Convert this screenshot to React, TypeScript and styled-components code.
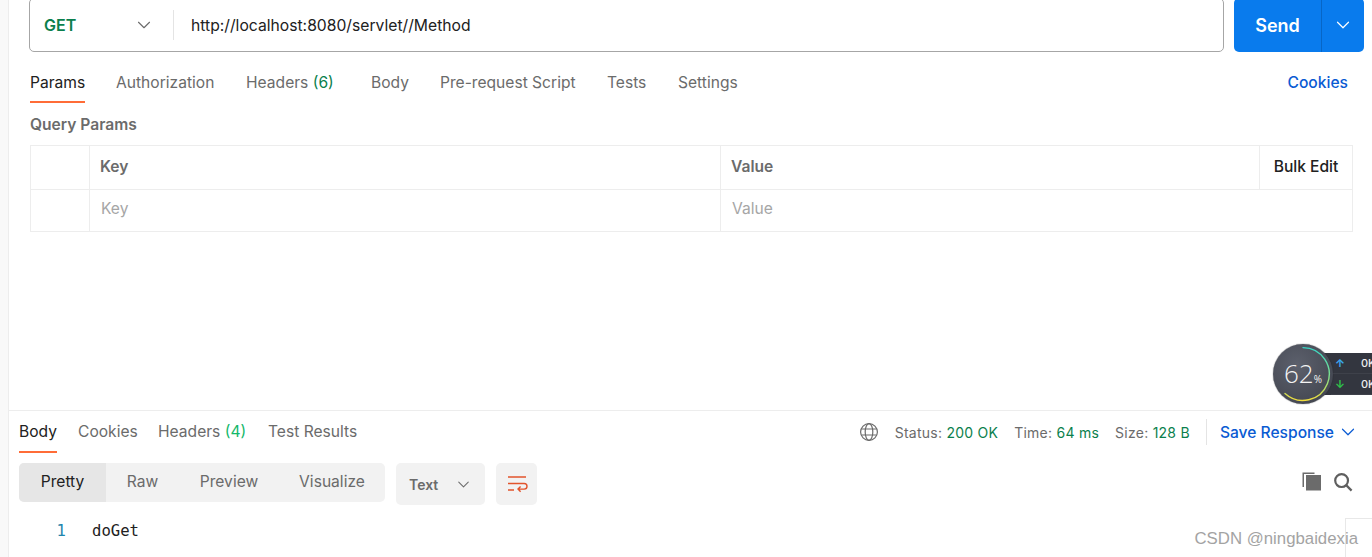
import React from "react";
import styled, { createGlobalStyle } from "styled-components";
import { ChevronDown } from "lucide-react";

const GlobalStyle = createGlobalStyle`
  html, body {
    margin: 0;
    padding: 0;
    background: #fff;
  }
  body {
    font-family: Inter, "Liberation Sans", sans-serif;
    font-size: 15.6px;
    color: #212121;
  }
  * {
    box-sizing: border-box;
  }
`;

const requestTabs = [
  { label: "Params", active: true, width: 55, gap: 31 },
  { label: "Authorization", width: 99, gap: 31 },
  { label: "Headers", count: "(6)", width: 88, gap: 37 },
  { label: "Body", width: 38, gap: 31 },
  { label: "Pre-request Script", width: 136, gap: 31 },
  { label: "Tests", width: 40, gap: 31 },
  { label: "Settings", width: 61, gap: 0 },
];

const responseTabs = [
  { label: "Body", active: true, width: 38, gap: 21 },
  { label: "Cookies", width: 59, gap: 21 },
  { label: "Headers", count: "(4)", width: 89, gap: 21 },
  { label: "Test Results", width: 89, gap: 0 },
];

const viewModes = [
  { label: "Pretty", active: true, width: 87 },
  { label: "Raw", width: 73 },
  { label: "Preview", width: 100 },
  { label: "Visualize", width: 106 },
];

export default function App() {
  return (
    <>
      <GlobalStyle />
      <Shell>
        <Rail />
        <Main>
          <RequestPane>
            <UrlRow>
              <UrlBox>
                <MethodSelect>
                  <MethodName>GET</MethodName>
                  <ChevronDown size={22} strokeWidth={1.2} color="#6b6b6b" />
                </MethodSelect>
                <UrlText>http://localhost:8080/servlet//Method</UrlText>
              </UrlBox>
              <SendButton>
                <SendLabel>Send</SendLabel>
                <SendArrow>
                  <ChevronDown size={22} strokeWidth={1.3} color="#fff" />
                </SendArrow>
              </SendButton>
            </UrlRow>

            <RequestTabs>
              {requestTabs.map((tab) => (
                <Tab key={tab.label} $active={tab.active} $width={tab.width} $gap={tab.gap} $height={40} $top={10}>
                  {tab.label}
                  {tab.count && <TabCount $tone="#0b7f4d"> {tab.count}</TabCount>}
                </Tab>
              ))}
              <CookiesLink>Cookies</CookiesLink>
            </RequestTabs>

            <SectionTitle>Query Params</SectionTitle>

            <ParamsTable>
              <ParamsRow $height={44}>
                <CheckCell />
                <KeyCell>
                  <HeadText>Key</HeadText>
                </KeyCell>
                <ValueCell>
                  <HeadText>Value</HeadText>
                </ValueCell>
                <BulkCell>Bulk Edit</BulkCell>
              </ParamsRow>
              <ParamsRow $height={42}>
                <CheckCell />
                <KeyCell>
                  <Placeholder>Key</Placeholder>
                </KeyCell>
                <ValueCell $wide>
                  <Placeholder>Value</Placeholder>
                </ValueCell>
              </ParamsRow>
            </ParamsTable>
          </RequestPane>

          <ResponsePane>
            <ResponseTop>
              <ResponseTabs>
                {responseTabs.map((tab) => (
                  <Tab key={tab.label} $active={tab.active} $width={tab.width} $gap={tab.gap} $height={42} $top={11}>
                    {tab.label}
                    {tab.count && <TabCount $tone="#14b86a"> {tab.count}</TabCount>}
                  </Tab>
                ))}
              </ResponseTabs>
              <StatusBar>
                <GlobeIcon viewBox="0 0 20 20" fill="none" stroke="#6b6b6b" strokeWidth="1.2">
                  <circle cx="10" cy="10" r="8.4" />
                  <ellipse cx="10" cy="10" rx="3.8" ry="8.4" />
                  <path d="M2.4 7h15.2M2.4 13h15.2" />
                </GlobeIcon>
                <StatusItem $first>
                  Status: <StatusValue>200 OK</StatusValue>
                </StatusItem>
                <StatusItem>
                  Time: <StatusValue>64 ms</StatusValue>
                </StatusItem>
                <StatusItem>
                  Size: <StatusValue>128 B</StatusValue>
                </StatusItem>
                <SaveResponse>
                  Save Response
                  <ChevronDown size={22} strokeWidth={1.3} color="#0a5bd3" />
                </SaveResponse>
              </StatusBar>
            </ResponseTop>

            <ToolRow>
              <ViewModes>
                {viewModes.map((mode) => (
                  <ViewMode key={mode.label} $active={mode.active} $width={mode.width}>
                    {mode.label}
                  </ViewMode>
                ))}
              </ViewModes>
              <FormatSelect>
                Text
                <ChevronDown size={19} strokeWidth={1.3} color="#6b6b6b" />
              </FormatSelect>
              <WrapButton>
                <svg width="22" height="18" viewBox="0 0 22 18" fill="none" stroke="#e2542c" strokeWidth="1.4">
                  <path d="M2 2h18M2 8.5h16.2a2.8 2.8 0 0 1 0 5.6H12M14.6 11.4 12 14.1l2.6 2.7M2 15h6" />
                </svg>
              </WrapButton>
              <ToolIcons>
                <svg width="20" height="20" viewBox="0 0 20 20" fill="#6b6b6b">
                  <path d="M4 3h15v15.5H4z" />
                  <path d="M.5.5h12V2H2v13H.5z" />
                </svg>
                <svg width="20" height="20" viewBox="0 0 20 20" fill="none" stroke="#5f5f5f" strokeWidth="2.2">
                  <circle cx="8.6" cy="8.6" r="6.4" />
                  <path d="m13.4 13.4 5.2 5.2" />
                </svg>
              </ToolIcons>
            </ToolRow>

            <CodeRow>
              <LineNumber>1</LineNumber>
              <CodeText>doGet</CodeText>
            </CodeRow>
          </ResponsePane>
        </Main>
      </Shell>

      <NetWidget>
        <SpeedPanel>
          <SpeedRow>
            <SpeedArrow $tone="#3aa7f0">↑</SpeedArrow>
            <SpeedValue>0K</SpeedValue>
          </SpeedRow>
          <SpeedRow>
            <SpeedArrow $tone="#2ec24a">↓</SpeedArrow>
            <SpeedValue>0K</SpeedValue>
          </SpeedRow>
        </SpeedPanel>
        <Gauge>
          <GaugeRing viewBox="0 0 60 60" fill="none" strokeWidth="1.4" strokeLinecap="round">
            <defs>
              <linearGradient id="gaugeTone" x1="0" y1="0" x2="0" y2="1">
                <stop offset="0" stopColor="#38d6c6" />
                <stop offset="0.55" stopColor="#7fe08c" />
                <stop offset="1" stopColor="#f0dc3c" />
              </linearGradient>
            </defs>
            <path d="M30 3.6A26.4 26.4 0 1 1 12 49.5" stroke="url(#gaugeTone)" />
          </GaugeRing>
          <GaugeValue>
            62<GaugeUnit>%</GaugeUnit>
          </GaugeValue>
        </Gauge>
      </NetWidget>

      <ScrollCorner />
      <Watermark>CSDN @ningbaidexia</Watermark>
    </>
  );
}

const Shell = styled.div`
  display: flex;
  width: 1372px;
  height: 557px;
  overflow: hidden;
`;

const Rail = styled.div`
  flex: 0 0 9px;
  background: #f9f9f9;
  border-right: 1px solid #ededed;
`;

const Main = styled.main`
  flex: 1;
  display: flex;
  flex-direction: column;
  min-width: 0;
`;

const RequestPane = styled.section`
  flex: 0 0 410px;
  padding: 0 19px 0 21px;
`;

const UrlRow = styled.div`
  display: flex;
  gap: 10px;
  height: 54px;
  margin: -2px -11px 0 -1px;
`;

const UrlBox = styled.div`
  flex: 0 0 1195px;
  display: flex;
  align-items: center;
  border: 1px solid #a6a6a6;
  border-radius: 5px;
`;

const MethodSelect = styled.div`
  display: flex;
  align-items: center;
  justify-content: space-between;
  width: 144px;
  height: 30px;
  padding: 0 18px 0 14px;
  border-right: 1px solid #e4e4e4;
`;

const MethodName = styled.span`
  font-size: 16px;
  font-weight: 600;
  color: #0b7f4d;
`;

const UrlText = styled.span`
  padding-left: 17px;
  font-size: 15.7px;
  color: #212121;
`;

const SendButton = styled.div`
  flex: 0 0 130px;
  display: flex;
  background: #097bed;
  border-radius: 5px;
  color: #fff;
`;

const SendLabel = styled.span`
  flex: 1;
  display: flex;
  align-items: center;
  justify-content: center;
  font-size: 18px;
  font-weight: 600;
`;

const SendArrow = styled.span`
  flex: 0 0 43px;
  display: flex;
  align-items: center;
  justify-content: center;
  border-left: 1px solid #0766c6;
`;

const RequestTabs = styled.nav`
  display: flex;
  height: 52px;
  padding-top: 11px;
`;

const ResponseTabs = styled.nav`
  display: flex;
`;

const Tab = styled.div<{ $active?: boolean; $width: number; $gap: number; $height: number; $top: number }>`
  flex: 0 0 ${(p) => p.$width}px;
  min-width: 0;
  height: ${(p) => p.$height}px;
  margin-right: ${(p) => p.$gap}px;
  padding-top: ${(p) => p.$top}px;
  white-space: pre;
  color: ${(p) => (p.$active ? "#212121" : "#6b6b6b")};
  border-bottom: 2px solid ${(p) => (p.$active ? "#ff6c37" : "transparent")};
`;

const TabCount = styled.span<{ $tone: string }>`
  color: ${(p) => p.$tone};
`;

const CookiesLink = styled.a`
  margin-left: auto;
  padding: 10px 5px 0 0;
  font-weight: 500;
  color: #0a5bd3;
`;

const SectionTitle = styled.h2`
  margin: 10px 0 9px;
  height: 22px;
  font-size: 15.6px;
  line-height: 22px;
  font-weight: 600;
  color: #6b6b6b;
`;

const ParamsTable = styled.div`
  border: 1px solid #ededed;
  border-bottom: 0;
`;

const ParamsRow = styled.div<{ $height: number }>`
  display: flex;
  height: ${(p) => p.$height}px;
  border-bottom: 1px solid #ededed;
`;

const CheckCell = styled.div`
  flex: 0 0 59px;
  border-right: 1px solid #ededed;
`;

const KeyCell = styled.div`
  flex: 0 0 631px;
  display: flex;
  align-items: center;
  padding-left: 10px;
  border-right: 1px solid #ededed;
`;

const ValueCell = styled.div<{ $wide?: boolean }>`
  flex: ${(p) => (p.$wide ? "1" : "0 0 539px")};
  display: flex;
  align-items: center;
  padding-left: 10px;
  border-right: ${(p) => (p.$wide ? "0" : "1px solid #ededed")};
`;

const HeadText = styled.span`
  padding-bottom: 3px;
  font-weight: 600;
  color: #6b6b6b;
`;

const Placeholder = styled.span`
  padding: 0 0 5px 1px;
  color: #a6a6a6;
`;

const BulkCell = styled.div`
  flex: 1;
  display: flex;
  align-items: center;
  justify-content: center;
  padding-bottom: 3px;
  font-weight: 500;
  color: #212121;
`;

const ResponsePane = styled.section`
  flex: 1;
  padding: 0 10px;
  border-top: 1px solid #ededed;
`;

const ResponseTop = styled.div`
  display: flex;
  justify-content: space-between;
  height: 52px;
`;

const StatusBar = styled.div`
  display: flex;
  align-items: center;
  height: 42px;
  padding-right: 3px;
  font-size: 14px;
  letter-spacing: 0.25px;
`;

const GlobeIcon = styled.svg`
  width: 20px;
  height: 20px;
  margin-right: 16px;
`;

const StatusItem = styled.span<{ $first?: boolean }>`
  margin-left: ${(p) => (p.$first ? 0 : 16)}px;
  color: #6b6b6b;
`;

const StatusValue = styled.span`
  color: #0b7f4d;
`;

const SaveResponse = styled.div`
  display: flex;
  align-items: center;
  gap: 3px;
  height: 26px;
  margin-left: 16px;
  padding-left: 13px;
  border-left: 1px solid #e4e4e4;
  font-size: 15.6px;
  letter-spacing: 0;
  font-weight: 500;
  color: #0a5bd3;
`;

const ToolRow = styled.div`
  display: flex;
  align-items: flex-start;
  height: 42px;
`;

const ViewModes = styled.div`
  display: flex;
  height: 39px;
  background: #f2f2f2;
  border-radius: 5px;
  overflow: hidden;
`;

const ViewMode = styled.div<{ $active?: boolean; $width: number }>`
  flex: 0 0 ${(p) => p.$width}px;
  display: flex;
  align-items: center;
  justify-content: center;
  padding-bottom: 2px;
  color: ${(p) => (p.$active ? "#212121" : "#6b6b6b")};
  background: ${(p) => (p.$active ? "#e6e6e6" : "transparent")};
`;

const FormatSelect = styled.div`
  display: flex;
  align-items: center;
  justify-content: space-between;
  width: 89px;
  height: 42px;
  margin-left: 11px;
  padding: 0 12px 0 13px;
  background: #f2f2f2;
  border-radius: 5px;
  font-size: 14px;
  font-weight: 600;
  color: #6b6b6b;
`;

const WrapButton = styled.div`
  display: flex;
  align-items: center;
  justify-content: center;
  width: 41px;
  height: 42px;
  margin-left: 11px;
  background: #f2f2f2;
  border-radius: 5px;
`;

const ToolIcons = styled.div`
  display: flex;
  align-items: center;
  gap: 11px;
  height: 38px;
  margin-left: auto;
  padding-right: 9px;
`;

const CodeRow = styled.div`
  display: flex;
  align-items: center;
  height: 20px;
  margin-top: 16px;
  font-family: "DejaVu Sans Mono", "Liberation Mono", monospace;
  font-size: 15.6px;
`;

const LineNumber = styled.span`
  width: 47px;
  text-align: right;
  color: #1f86ad;
`;

const CodeText = styled.span`
  margin-left: 26px;
  color: #212121;
`;

const NetWidget = styled.div`
  position: absolute;
  left: 1273px;
  top: 344px;
  width: 99px;
  height: 60px;
`;

const SpeedPanel = styled.div`
  position: absolute;
  left: 50px;
  top: 9px;
  width: 49px;
  height: 42px;
  padding-left: 8px;
  background: #33363f;
`;

const SpeedRow = styled.div`
  display: flex;
  align-items: center;
  justify-content: space-between;
  height: 21px;
  padding-left: 4px;
  border-bottom: 1px solid #3e414a;
`;

const SpeedArrow = styled.span<{ $tone: string }>`
  color: ${(p) => p.$tone};
  font-size: 11px;
  font-weight: 700;
`;

const SpeedValue = styled.span`
  width: 11px;
  overflow: hidden;
  white-space: nowrap;
  font-size: 11px;
  font-weight: 500;
  color: #eee;
`;

const Gauge = styled.div`
  position: absolute;
  left: 0;
  top: 0;
  display: flex;
  align-items: center;
  justify-content: center;
  width: 60px;
  height: 60px;
  padding-bottom: 3px;
  border-radius: 50%;
  background: radial-gradient(circle at 40% 35%, #5c606c, #3d404a);
  box-shadow: 0 0 1px #222;
`;

const GaugeRing = styled.svg`
  position: absolute;
  inset: 0;
`;

const GaugeValue = styled.span`
  font-family: "Open Sans", sans-serif;
  font-size: 26px;
  font-weight: 300;
  color: #f4f4f4;
`;

const GaugeUnit = styled.span`
  font-size: 10px;
  font-weight: 400;
`;

const ScrollCorner = styled.div`
  position: absolute;
  left: 1345px;
  top: 518px;
  width: 27px;
  height: 39px;
  border-top: 1px solid #e8e8e8;
  border-left: 1px solid #e8e8e8;
`;

const Watermark = styled.div`
  position: absolute;
  right: 14px;
  top: 529px;
  font-family: "Liberation Sans", Arial, sans-serif;
  font-size: 16.8px;
  color: #9a9a9a;
  opacity: 0.9;
`;
